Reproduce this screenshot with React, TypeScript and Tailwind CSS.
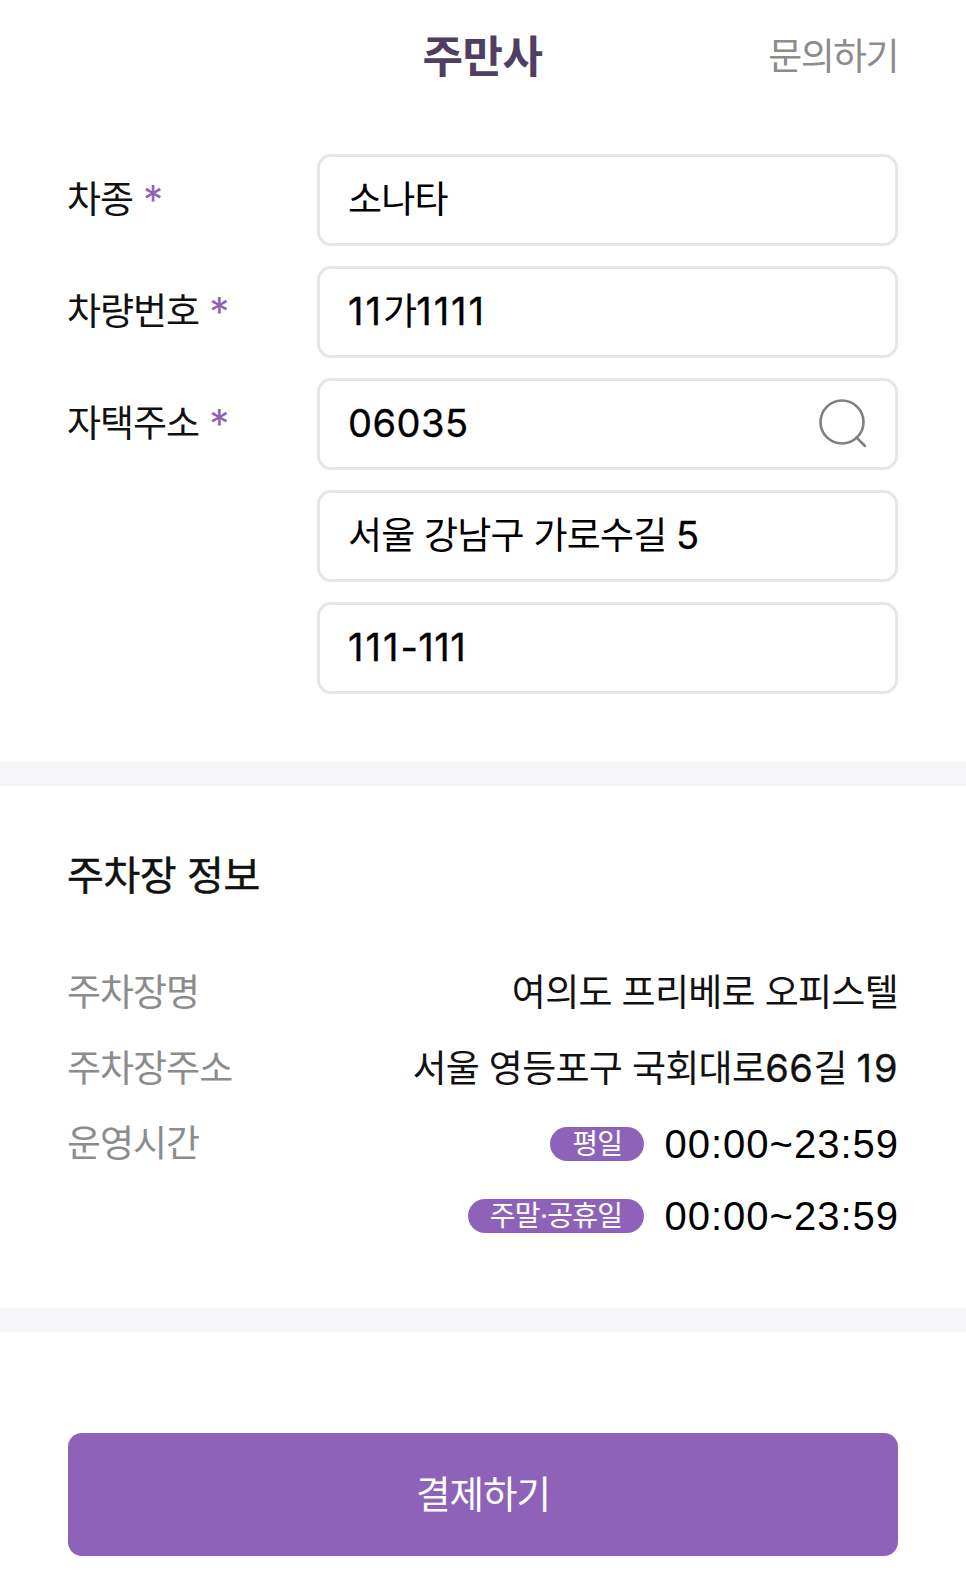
const font = "[font-family:Inter,'Noto_Sans_CJK_KR',sans-serif]";

function Mixed({ text }: { text: string }) {
  return (
    <>
      {text.split(/(1+|[0-9-]+)/).map((part, i) => {
        if (i % 2 === 0) return <span key={i}>{part}</span>;
        return (
          <span
            key={i}
            className={
              part[0] === "1"
                ? "text-[38px] tracking-[2px] [-webkit-text-stroke:0.35px_currentColor]"
                : "text-[38px] tracking-[0.5px] [-webkit-text-stroke:0.35px_currentColor]"
            }
          >
            {part}
          </span>
        );
      })}
    </>
  );
}

function Field({ value, icon }: { value: string; icon?: boolean }) {
  return (
    <div className="flex h-[92px] items-center justify-between rounded-[14px] border-[3px] border-[#e6e6e6] bg-white pl-[28px] pr-[28px]">
      <span className="pb-[2px] text-[37px] leading-none tracking-[-0.8px] text-black">
        <Mixed text={value} />
      </span>
      {icon && (
        <svg width="48" height="50" viewBox="0 0 48 50" fill="none" stroke="#808080" strokeWidth="2.6">
          <circle cx="23" cy="23" r="21.5" />
          <path d="M37.5 38.5L46 47" strokeLinecap="round" />
        </svg>
      )}
    </div>
  );
}

function Label({ text }: { text: string }) {
  return (
    <div className="flex h-[92px] w-[250px] shrink-0 items-start pt-[24px] text-[37px] leading-[44px] tracking-[-1px] text-[#111]">
      <span>{text}</span>
      <span className="ml-[10px] text-[40px] text-[#8f63ba]">*</span>
    </div>
  );
}

function InfoRow({ label, children }: { label?: string; children: React.ReactNode }) {
  return (
    <div className="flex items-center justify-between">
      <span className="text-[37px] leading-[48px] tracking-[-1px] text-[#8c8c8c]">{label}</span>
      {children}
    </div>
  );
}

function Hours({ tag, time }: { tag: string; time: string }) {
  return (
    <div className="flex items-center gap-[20px]">
      <span className="flex h-[34px] items-center rounded-full bg-[#8e62b9] px-[22px] text-[28px] leading-none tracking-[-0.7px] text-white">
        {tag}
      </span>
      <span className="-mr-[1px] text-[40px] leading-[48px] tracking-[1px] text-black [font-family:'Liberation_Sans',sans-serif]">{time}</span>
    </div>
  );
}

export default function App() {
  return (
    <div className={`h-[1583px] w-full overflow-hidden bg-white ${font}`}>
      <header className="grid h-[113px] grid-cols-[1fr_auto_1fr] items-center pl-[67px] pr-[68px]">
        <span />
        <h1 className="text-[44px] font-bold leading-none tracking-[-0.5px] text-[#4e3f63]">주만사</h1>
        <a className="justify-self-end text-[37px] leading-none tracking-[-1.6px] text-[#8c8c8c]">문의하기</a>
      </header>

      <section className="flex flex-col gap-[20px] pl-[67px] pr-[68px] pt-[41px]">
        <div className="flex">
          <Label text="차종" />
          <div className="flex-1"><Field value="소나타" /></div>
        </div>
        <div className="flex">
          <Label text="차량번호" />
          <div className="flex-1"><Field value="11가1111" /></div>
        </div>
        <div className="flex">
          <Label text="자택주소" />
          <div className="flex flex-1 flex-col gap-[20px]">
            <Field value="06035" icon />
            <Field value="서울 강남구 가로수길 5" />
            <Field value="111-111" />
          </div>
        </div>
      </section>

      <div className="mt-[68px] h-[24px] bg-[#f6f6f8]" />

      <section className="pl-[67px] pr-[68px] pt-[64px]">
        <h2 className="text-[40px] leading-[52px] tracking-[-0.4px] text-[#111] [-webkit-text-stroke:0.5px_#111]">주차장 정보</h2>
        <div className="mt-[67px] flex flex-col">
          <InfoRow label="주차장명">
            <span className="text-[37px] leading-[48px] tracking-[-0.7px] text-[#111]">여의도 프리베로 오피스텔</span>
          </InfoRow>
          <div className="mt-[27px]">
            <InfoRow label="주차장주소">
              <span className="text-[37px] leading-[48px] tracking-[-0.7px] text-[#111]">
                <Mixed text="서울 영등포구 국회대로66길 19" />
              </span>
            </InfoRow>
          </div>
          <div className="mt-[27px]">
            <InfoRow label="운영시간">
              <Hours tag="평일" time="00:00~23:59" />
            </InfoRow>
          </div>
          <div className="mt-[24px]">
            <InfoRow>
              <Hours tag="주말·공휴일" time="00:00~23:59" />
            </InfoRow>
          </div>
        </div>
      </section>

      <div className="mt-[68px] h-[24px] bg-[#f6f6f8]" />

      <div className="pl-[68px] pr-[68px] pt-[101px]">
        <button className="flex h-[123px] w-full items-center justify-center rounded-[14px] bg-[#8e62b9] text-[37.5px] tracking-[-1px] text-white">
          <span className="pt-[2px]">결제하기</span>
        </button>
      </div>
    </div>
  );
}
